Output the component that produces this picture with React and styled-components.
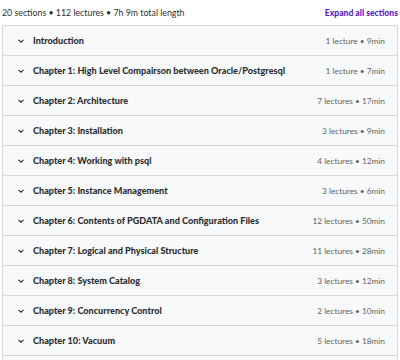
import React from "react";
import styled, { createGlobalStyle } from "styled-components";

const Global = createGlobalStyle`
  html, body { margin: 0; padding: 0; background: #fff; }
  body { font-family: Lato, "Noto Sans", sans-serif; color: #2d2f31; }
`;

const Page = styled.div`
  width: 400px;
  height: 360px;
  overflow: hidden;
  padding: 0 2px;
  box-sizing: border-box;
`;

const Header = styled.div`
  height: 25px;
  display: flex;
  align-items: center;
  justify-content: space-between;
`;

const Summary = styled.span`
  font-size: 8.8px;
  color: #2d2f31;
`;

const Expand = styled.span`
  font-size: 8.6px;
  font-weight: 900;
  color: #5624d0;
`;

const List = styled.div`
  border: 1px solid #d1d7dc;
  border-bottom: none;
`;

const Row = styled.div`
  height: 29px;
  display: flex;
  align-items: center;
  background: #f7f9fa;
  border-bottom: 1px solid #d1d7dc;
  padding: 0 12px 0 14px;
`;

const Chevron = styled.svg`
  width: 8px;
  height: 8px;
  margin-right: 8px;
  flex-shrink: 0;
`;

const Title = styled.span`
  flex: 1;
  font-size: 9.1px;
  font-weight: 900;
  color: #2d2f31;
  white-space: nowrap;
`;

const Meta = styled.span`
  font-size: 8.3px;
  color: #5f6468;
  white-space: nowrap;
`;

const sections = [
  ["Introduction", "1 lecture • 9min"],
  ["Chapter 1: High Level Compairson between Oracle/Postgresql", "1 lecture • 7min"],
  ["Chapter 2: Architecture", "7 lectures • 17min"],
  ["Chapter 3: Installation", "3 lectures • 9min"],
  ["Chapter 4: Working with psql", "4 lectures • 12min"],
  ["Chapter 5: Instance Management", "3 lectures • 6min"],
  ["Chapter 6: Contents of PGDATA and Configuration Files", "12 lectures • 50min"],
  ["Chapter 7: Logical and Physical Structure", "11 lectures • 28min"],
  ["Chapter 8: System Catalog", "3 lectures • 12min"],
  ["Chapter 9: Concurrency Control", "2 lectures • 10min"],
  ["Chapter 10: Vacuum", "5 lectures • 18min"],
];

export default function App() {
  return (
    <Page>
      <Global />
      <Header>
        <Summary>20 sections • 112 lectures • 7h 9m total length</Summary>
        <Expand>Expand all sections</Expand>
      </Header>
      <List>
        {sections.map(([t, m]) => (
          <Row key={t}>
            <Chevron viewBox="0 0 8 8">
              <path d="M1.5 2.8 L4 5.2 L6.5 2.8" fill="none" stroke="#2d2f31" strokeWidth="1.1" />
            </Chevron>
            <Title>{t}</Title>
            <Meta>{m}</Meta>
          </Row>
        ))}
        <Row />
      </List>
    </Page>
  );
}
